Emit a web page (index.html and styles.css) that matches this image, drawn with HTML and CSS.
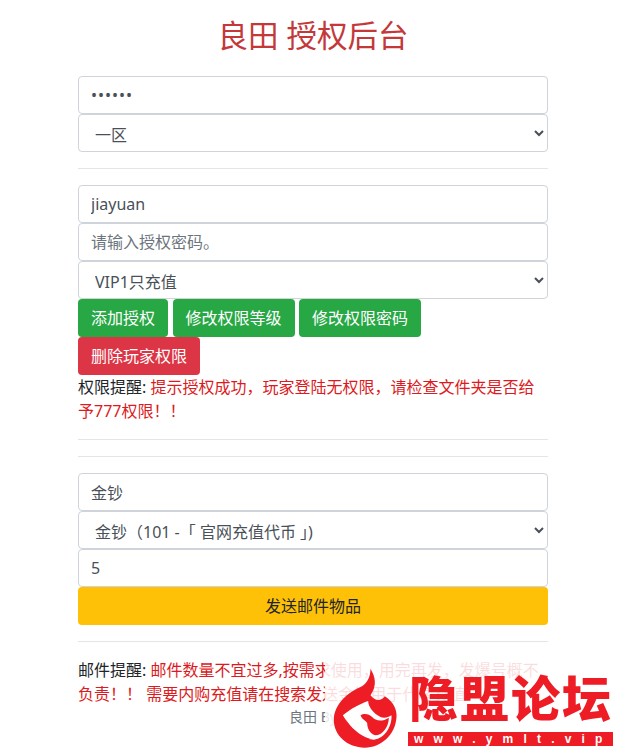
FILE: index.html
```html
<!DOCTYPE html>
<html lang="zh-CN">
<head>
    <meta charset="UTF-8">
    <meta name="viewport" content="width=device-width, initial-scale=1.0">
    <title>良田 授权后台</title>
    <link rel="stylesheet" href="styles.css">
</head>
<body>
    <div class="container">
        <h1 class="title">良田 授权后台</h1>

        <!-- 区服 -->
        <input class="form-control form-password" type="password" value="123456">
        <select class="form-control form-select">
            <option>一区</option>
        </select>
        <hr>

        <!-- 授权 -->
        <input class="form-control" type="text" value="jiayuan">
        <input class="form-control" type="text" placeholder="请输入授权密码。">
        <select class="form-control form-select">
            <option>VIP1只充值</option>
        </select>
        <div class="btn-row">
            <button class="btn btn-success">添加授权</button>
            <button class="btn btn-success">修改权限等级</button>
            <button class="btn btn-success">修改权限密码</button>
        </div>
        <div class="btn-row">
            <button class="btn btn-danger">删除玩家权限</button>
        </div>
        <p class="notice">权限提醒: <span class="notice-red">提示授权成功，玩家登陆无权限，请检查文件夹是否给予777权限！！</span></p>
        <hr>
        <hr>

        <!-- 邮件 -->
        <input class="form-control" type="text" value="金钞">
        <select class="form-control form-select">
            <option>金钞（101 -「 官网充值代币 」)</option>
        </select>
        <input class="form-control" type="text" value="5">
        <button class="btn btn-warning btn-block">发送邮件物品</button>
        <hr>
        <p class="notice">邮件提醒: <span class="notice-red">邮件数量不宜过多,按需求使用，用完再发，发爆号概不负责！！ 需要内购充值请在搜索发送金钞用于代客充值</span></p>
        <p class="footer">良田 By</p>
    </div>

    <!-- 水印 -->
    <div class="watermark">
        <svg class="watermark-logo" viewBox="20 20 200 246" width="67" height="82">
            <path fill="#ee1c25" d="M135 25C150 50 155 75 135 105C148 122 165 125 178 108C205 125 215 150 213 170C210 225 165 262 118 262C65 262 25 225 25 180C25 130 70 95 105 80C125 70 135 50 135 25Z"/>
            <path fill="#fff" d="M52 165C75 145 105 130 128 122C128 140 145 160 165 170C175 175 187 172 198 165C200 195 180 235 145 238C105 238 75 205 52 165Z"/>
            <path fill="#ee1c25" d="M105 165C115 158 130 160 140 170C150 182 170 185 190 172C190 200 170 225 150 225C135 222 125 205 125 188C120 180 110 178 105 165Z"/>
            <path fill="#ee1c25" d="M60 176C75 200 100 225 135 236C110 240 80 225 60 176Z"/>
        </svg>
        <div class="watermark-brand">
            <div class="watermark-name">隐盟论坛</div>
            <div class="watermark-url">www.ymlt.vip</div>
        </div>
    </div>
</body>
</html>
```
FILE: styles.css
```css
* {
    box-sizing: border-box;
}

body {
    margin: 0;
    font-family: "Noto Sans", "Noto Sans CJK SC", sans-serif;
    font-size: 16px;
    line-height: 1.5;
    color: #212529;
    background-color: #fff;
    position: relative;
    height: 755px;
    overflow: hidden;
}

.container {
    width: 470px;
    margin-left: 78px;
    padding-top: 13px;
}

.title {
    margin: 0 0 18px;
    font-size: 30.5px;
    font-weight: 400;
    line-height: 45px;
    text-align: center;
    color: #c4383a;
}

.form-control {
    display: block;
    width: 100%;
    height: 38px;
    padding: 6px 12px;
    font: inherit;
    color: #495057;
    background-color: #fff;
    border: 1px solid #ced4da;
    border-radius: 4px;
}

.form-control::placeholder {
    color: #6c757d;
}

.form-password {
    letter-spacing: 1px;
}

.form-select {
    padding-top: 8px;
    padding-bottom: 5px;
}

hr {
    margin: 16px 0;
    border: 0;
    border-top: 1px solid rgba(0, 0, 0, 0.1);
}

.btn-row {
    display: flex;
    gap: 4.5px;
}

.btn {
    height: 38px;
    padding: 6px 12px;
    font: inherit;
    color: #fff;
    border: 1px solid transparent;
    border-radius: 4px;
    cursor: pointer;
}

.btn-success {
    background-color: #28a745;
}

.btn-danger {
    background-color: #dc3545;
}

.btn-warning {
    color: #212529;
    background-color: #ffc107;
}

.btn-block {
    display: block;
    width: 100%;
}

.notice {
    margin: 0;
}

.notice-red {
    color: #dc1a22;
}

.footer {
    margin: 0;
    text-align: center;
    color: #6c757d;
    font-size: 14px;
}

/* watermark over the bottom right corner */
.watermark {
    position: absolute;
    left: 325px;
    top: 655px;
    width: 287px;
    height: 100px;
    padding: 12px 2px 8px 7px;
    display: flex;
    gap: 9px;
    background-color: rgba(255, 255, 255, 0.85);
}

.watermark-logo {
    flex: none;
}

.watermark-brand {
    flex: 1;
    display: flex;
    flex-direction: column;
    color: #ee1c25;
}

.watermark-name {
    font-family: "Noto Sans CJK SC", sans-serif;
    font-weight: 900;
    font-size: 49px;
    line-height: 58px;
    letter-spacing: 2px;
    padding-left: 1px;
    white-space: nowrap;
}

.watermark-url {
    margin-top: 7px;
    height: 14px;
    padding-left: 6px;
    font-family: "Liberation Sans", sans-serif;
    font-weight: 700;
    font-size: 12px;
    line-height: 14px;
    letter-spacing: 10.2px;
    color: #fff;
    background-color: #ee1c25;
    white-space: nowrap;
    overflow: hidden;
}
```
